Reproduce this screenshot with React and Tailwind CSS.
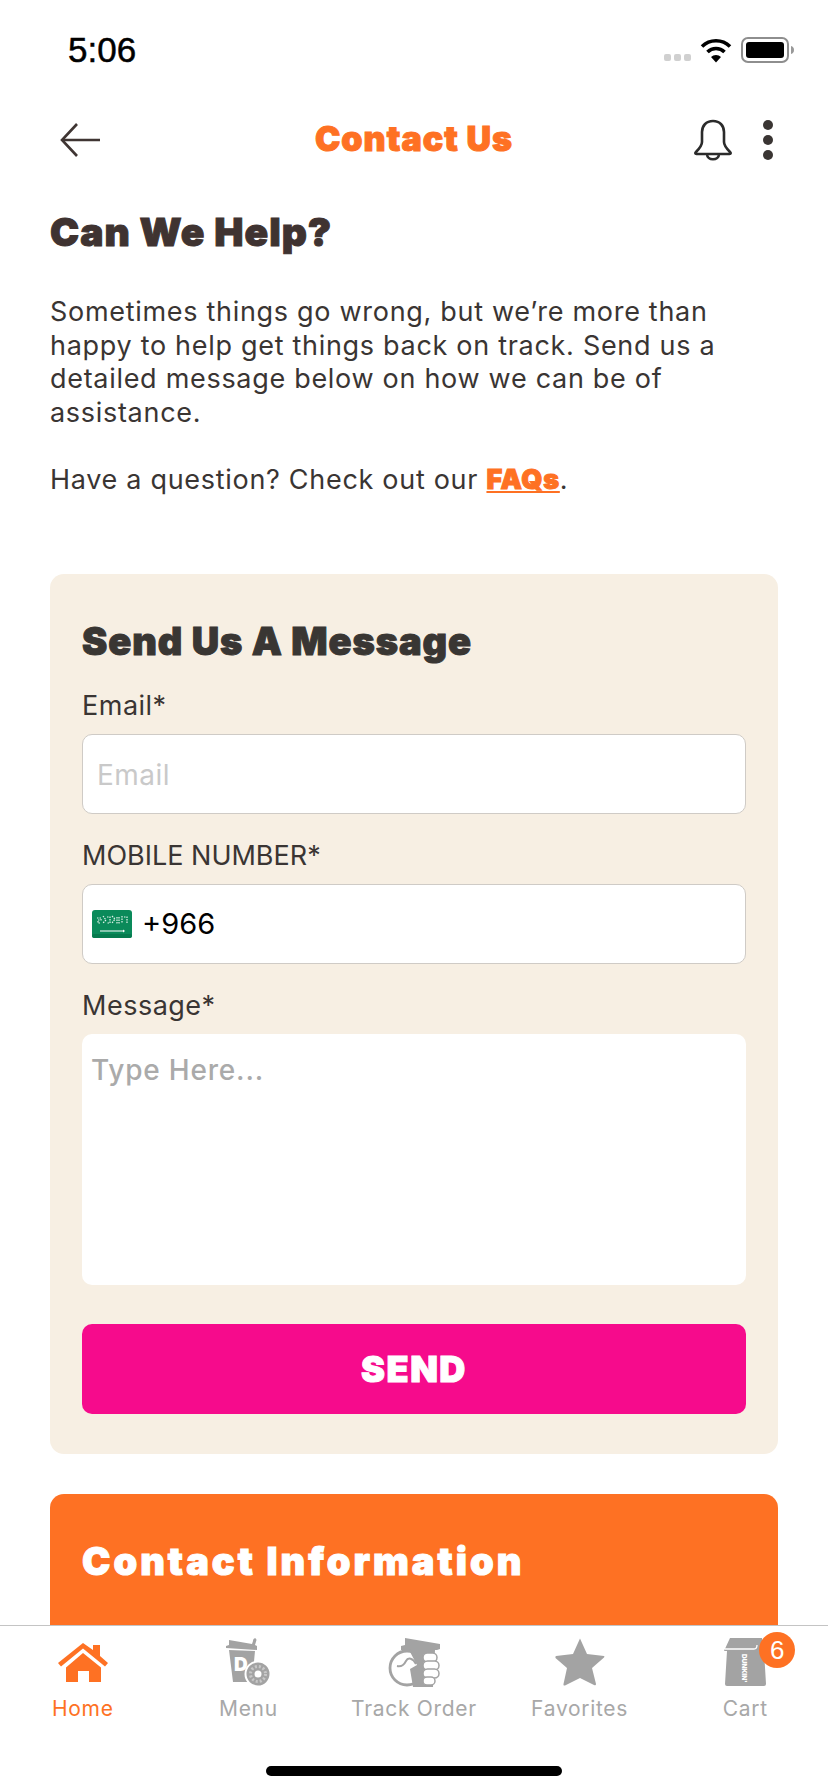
const HEAVY = "font-['Inter',sans-serif] font-black [-webkit-text-stroke:1px_currentColor]"

const BackArrow = () => (
  <svg width="42" height="36" viewBox="0 0 42 36" fill="none" stroke="#3f3533" strokeWidth="2.600">
    <path d="M41 18H3" />
    <path d="M18 2L3 18l15 16" />
  </svg>
)

const BellIcon = () => (
  <svg width="40" height="42" viewBox="0 0 40 42" fill="none" stroke="#2b2b2b" strokeWidth="2.600" strokeLinejoin="round">
    <path d="M20 2c-7 0-11 5-11 11v10c0 4-3 7-6 10-1 1-1 2 .5 2h33c1.500 0 1.500-1 .5-2-3-3-6-6-6-10V13c0-6-4-11-11-11z" />
    <path d="M14 35c0 7 12 7 12 0" />
  </svg>
)

const Wifi = () => (
  <svg width="32" height="25" viewBox="0 0 32 25" fill="none" stroke="#000" strokeWidth="3.600">
    <path d="M2 8.500a20 20 0 0 1 28 0" />
    <path d="M7.500 14a12 12 0 0 1 17 0" />
    <path d="M16 24.500l-5-5.500a7 7 0 0 1 10 0z" fill="#000" stroke="none" />
  </svg>
)

const Battery = () => (
  <svg width="53" height="26" viewBox="0 0 53 26">
    <rect x="1" y="1" width="46" height="24" rx="6" fill="none" stroke="#8e8e8e" strokeWidth="2" />
    <rect x="5" y="5" width="38" height="16" rx="3" fill="#000" />
    <path d="M50 9c2 .5 3 2 3 4s-1 3.500-3 4z" fill="#999" />
  </svg>
)

const HomeIcon = () => (
  <svg width="52" height="45" viewBox="0 0 52 45" fill="#fe7123">
    <path d="M26 1 L36 8 V3 H43 V14 L51 21 L48 24.500 L26 6.500 L4 24.500 L1 21 Z" />
    <path d="M26 11 L44 25.500 V40 H32 V29 H21 V40 H9 V25.500 Z" />
  </svg>
)

const MenuIcon = () => (
  <svg width="46" height="50" viewBox="0 0 46 50">
    <path d="M4 3 L27 7 L28 4 C28 1 31 0 31.500 3 L30 8 L32 9 V13 L1 11 V9 L4 8 Z" fill="#a3a3a3" />
    <path d="M4 13 L30 14 L27 45 H8 Z" fill="#a3a3a3" />
    <text x="9" y="34" fontSize="19" fontWeight="900" fill="#fff" fontFamily="Inter, sans-serif">D</text>
    <circle cx="33" cy="37" r="12.500" fill="#a3a3a3" stroke="#fff" strokeWidth="2" />
    <circle cx="33" cy="37" r="7.500" fill="none" stroke="#c8c8c8" strokeWidth="3" strokeDasharray="2 2" />
    <circle cx="33" cy="37" r="3.500" fill="#fff" />
  </svg>
)

const TrackIcon = () => (
  <svg width="54" height="50" viewBox="0 0 54 50">
    <path d="M18 1 L53 7 V12 L50 13 H14 V9 L18 8 Z" fill="#a3a3a3" />
    <circle cx="20" cy="31" r="17" fill="#fff" stroke="#a3a3a3" strokeWidth="2.800" />
    <path d="M10 29c5 1 7-1 9-5 2-4 7-3 10 3" fill="none" stroke="#a3a3a3" strokeWidth="2" />
    <path d="M22 13 H48 L46 50 H26 L23 32 L30 28 Z" fill="#a3a3a3" />
    <g fill="#fff" stroke="#a3a3a3" strokeWidth="1.500">
      <rect x="36" y="16" width="14" height="9" rx="4.500" />
      <rect x="36" y="24" width="16" height="9" rx="4.500" />
      <rect x="36" y="32" width="16" height="9" rx="4.500" />
      <rect x="36" y="40" width="12" height="8" rx="4" />
    </g>
  </svg>
)

const StarIcon = () => (
  <svg width="50" height="49" viewBox="0 0 50 49" fill="#a3a3a3">
    <path d="M25 0.500 L32 16 L49 18 Q50 18.500 49 19.500 L37 30 L41 46 Q41 48 39 47 L25 40 L10 47.500 Q8 48 8.500 46 L12 30 L0.500 20 Q0 18.500 1 18 L18 16 Z" />
  </svg>
)

const CartIcon = () => (
  <svg width="42" height="50" viewBox="0 0 42 50">
    <path d="M6 1 H38 L40 14 L42 47 Q42 49 40 49 H3 Q1 49 1 47 L3 14 H0 Z" fill="#a3a3a3" />
    <path d="M1 12 H30 Q33 12 33 8" fill="none" stroke="#fff" strokeWidth="1.300" />
    <text x="0" y="0" transform="translate(17.500 17) rotate(90)" fontSize="6.500" fontWeight="900" fill="#fff" fontFamily="Inter, sans-serif">DUNKIN'</text>
  </svg>
)

const SaudiFlag = () => (
  <svg width="40" height="28" viewBox="0 0 40 28">
    <rect width="40" height="28" rx="3" fill="#0a8a5a" />
    <rect y="24" width="40" height="4" rx="2" fill="#067a4e" />
    <path d="M5 8h4v2H6v3h3M11 6l3 4-3 3M15 7h3v6h-3M20 6l3 3-3 4M25 7v6h2V7M30 6v7M32 7h3v6" fill="none" stroke="#e4f3ec" strokeWidth="1.200" strokeDasharray="1.500 1" />
    <path d="M8 21h23" stroke="#fff" strokeWidth="1" />
    <path d="M31 19.500l2 1.500-2 1.500z" fill="#fff" />
  </svg>
)

const TABS = [
  { label: "Home", icon: <HomeIcon />, active: true },
  { label: "Menu", icon: <MenuIcon /> },
  { label: "Track Order", icon: <TrackIcon /> },
  { label: "Favorites", icon: <StarIcon /> },
  { label: "Cart", icon: <CartIcon />, badge: 6 },
]

const Field = ({ label, spaced = true, children }) => (
  <div className="mt-[25px]">
    <div className={`text-[27px] leading-[32px] pt-[1px] -mb-[1px] text-[#3a3533] ${spaced ? "tracking-[0.5px]" : ""}`}>{label}</div>
    <div className="mt-[13px]">{children}</div>
  </div>
)

export default function App() {
  return (
    <div className="w-[828px] h-[1792px] bg-white flex flex-col overflow-hidden font-['Inter',sans-serif]">
      {/* status bar */}
      <div className="h-[100px] shrink-0 flex items-center justify-between pl-[68px] pr-[34px]">
        <span className="text-[35px] font-['Liberation_Sans',sans-serif] text-black [-webkit-text-stroke:0.5px_#000]">5:06</span>
        <div className="flex items-center gap-[9px]">
          <div className="flex gap-[3px] mt-[14px]">
            <span className="w-[7px] h-[7px] bg-[#d0d0d0] rounded-[2px]" />
            <span className="w-[7px] h-[7px] bg-[#d0d0d0] rounded-[2px]" />
            <span className="w-[7px] h-[7px] bg-[#d0d0d0] rounded-[2px]" />
          </div>
          <Wifi />
          <Battery />
        </div>
      </div>

      {/* header */}
      <div className="h-[80px] shrink-0 flex items-center justify-between pl-[59px] pr-[55px] relative">
        <BackArrow />
        <div className={`absolute left-0 right-0 -top-[1px] h-[80px] leading-[80px] text-center text-[34px] tracking-[1px] text-[#fe7123] ${HEAVY}`}>Contact Us</div>
        <div className="flex items-center gap-[30px]">
          <BellIcon />
          <div className="flex flex-col gap-[5px]">
            <span className="w-[10px] h-[10px] rounded-full bg-[#3a3533]" />
            <span className="w-[10px] h-[10px] rounded-full bg-[#3a3533]" />
            <span className="w-[10px] h-[10px] rounded-full bg-[#3a3533]" />
          </div>
        </div>
      </div>

      {/* scrolled content, cut off by the tab bar */}
      <div className="flex-1 min-h-0 overflow-hidden px-[50px] border-b border-[#c4c4c4]">
        <h1 className={`mt-[28px] text-[39px] leading-[48px] tracking-[1px] text-[#3f3331] ${HEAVY}`}>Can We Help?</h1>
        <p className="mt-[39px] text-[27px] leading-[33.500px] tracking-[0.7px] text-[#3a3533]">
          Sometimes things go wrong, but we’re more than happy to help get things back on track. Send us a detailed message below on how we can be of assistance.
        </p>
        <p className="mt-[34px] text-[27px] leading-[33.500px] tracking-[0.7px] text-[#3a3533]">
          Have a question? Check out our <a className={`text-[#fe7123] underline ${HEAVY}`}>FAQs</a>.
        </p>

        <div className="mt-[77px] bg-[#f7efe3] rounded-[14px] px-[32px] pt-[44px] pb-[40px]">
          <h2 className={`text-[38px] leading-[46px] tracking-[0.9px] text-[#393633] ${HEAVY}`}>Send Us A Message</h2>
          <Field label="Email*">
            <div className="h-[80px] bg-white border border-[#cfcbc6] rounded-[10px] flex items-center px-[14px] pt-[2px] text-[28px] tracking-[0.5px] text-[#c9c9c9]">Email</div>
          </Field>
          <Field label="MOBILE NUMBER*" spaced={false}>
            <div className="h-[80px] bg-white border border-[#cfcbc6] rounded-[10px] flex items-center pl-[9px] gap-[10px] text-[29px] text-black">
              <SaudiFlag />
              <span>+966</span>
            </div>
          </Field>
          <Field label="Message*">
            <div className="h-[251px] bg-white rounded-[10px] px-[9px] pt-[18px] text-[28px] leading-[36px] tracking-[0.8px] font-medium text-[#aaaaaa]">Type Here...</div>
          </Field>
          <button className={`mt-[39px] w-full h-[90px] bg-[#f60b8c] rounded-[10px] text-white text-[36px] tracking-[1.500px] ${HEAVY}`}>SEND</button>
        </div>

        <div className="mt-[40px] bg-[#fe7123] rounded-t-[14px] h-[200px] px-[32px] pt-[44px]">
          <h2 className={`text-[38px] leading-[46px] tracking-[3px] text-white ${HEAVY}`}>Contact Information</h2>
        </div>
      </div>

      {/* tab bar */}
      <nav className="h-[166px] shrink-0 bg-white relative">
        <div className="grid grid-cols-5 pt-[5px]">
          {TABS.map((t) => (
            <div key={t.label} className="flex flex-col items-center">
              <div className="h-[56px] flex items-end justify-center relative">
                {t.icon}
                {t.badge && (
                  <span className="absolute left-[35px] top-[1px] w-[36px] h-[36px] rounded-full bg-[#fe7123] text-white text-[26px] flex items-center justify-center font-['Liberation_Sans',sans-serif]">{t.badge}</span>
                )}
              </div>
              <span className={`mt-[8px] text-[21px] leading-[28px] tracking-[0.7px] ${t.active ? "text-[#fe7123]" : "text-[#a8a8a8]"}`}>{t.label}</span>
            </div>
          ))}
        </div>
        <div className="absolute left-[266px] bottom-[16px] w-[296px] h-[10px] rounded-full bg-black" />
      </nav>
    </div>
  )
}
